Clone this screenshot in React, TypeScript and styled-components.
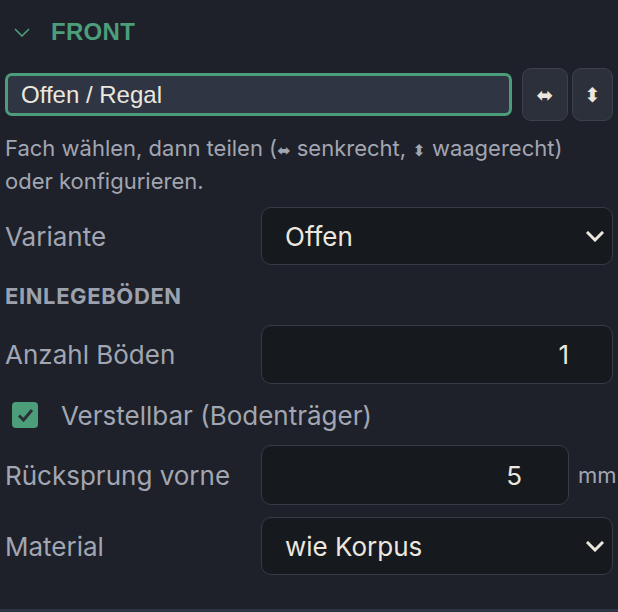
import React from 'react';
import styled, { createGlobalStyle } from 'styled-components';

const GlobalStyle = createGlobalStyle`
  html, body {
    margin: 0;
    padding: 0;
    background: #1e2129;
  }
`;

const Chevron = () => (
  <svg width='18' height='11' viewBox='0 0 18 11' fill='none'>
    <path d='M2 2l7 7 7-7' stroke='currentColor' strokeWidth='3' strokeLinecap='square' />
  </svg>
);

const Field = ({
  label,
  top,
  children,
}: {
  label: string;
  top: number;
  children: React.ReactNode;
}) => (
  <Row $top={top}>
    <Label>{label}</Label>
    {children}
  </Row>
);

const App = () => {
  return (
    <>
      <GlobalStyle />
      <Panel>
        <Header>
          <HeaderChevron>
            <svg width='16' height='9' viewBox='0 0 16 9' fill='none'>
              <path d='M1 1l7 7 7-7' stroke='currentColor' strokeWidth='1.6' />
            </svg>
          </HeaderChevron>
          <HeaderTitle>FRONT</HeaderTitle>
        </Header>

        <NameRow>
          <NameInput defaultValue='Offen / Regal' />
          <ButtonGroup>
            <SplitButton $width={46} title='senkrecht teilen'>⬌</SplitButton>
            <SplitButton $width={41} title='waagerecht teilen'>⬍</SplitButton>
          </ButtonGroup>
        </NameRow>

        <Hint>
          Fach wählen, dann teilen (<Arrow>⬌</Arrow> senkrecht, <Arrow>⬍</Arrow> waagerecht)
          <br />
          oder konfigurieren.
        </Hint>

        <Field label='Variante' top={10}>
          <SelectBox>
            <span>Offen</span>
            <Chevron />
          </SelectBox>
        </Field>

        <SubHeading>EINLEGEBÖDEN</SubHeading>

        <Field label='Anzahl Böden' top={17}>
          <NumberInput defaultValue='1' $height={59} />
        </Field>

        <CheckRow>
          <CheckBox>
            <svg width='17' height='14' viewBox='0 0 17 14' fill='none'>
              <path d='M2 7.5l4.5 4.5L15 2' stroke='#2b2f36' strokeWidth='3' />
            </svg>
          </CheckBox>
          <CheckLabel>Verstellbar (Bodenträger)</CheckLabel>
        </CheckRow>

        <Field label='Rücksprung vorne' top={17}>
          <UnitWrap>
            <NumberInput defaultValue='5' $height={60} $padRight={46} />
            <Unit>mm</Unit>
          </UnitWrap>
        </Field>

        <Field label='Material' top={12}>
          <SelectBox>
            <span>wie Korpus</span>
            <Chevron />
          </SelectBox>
        </Field>
      </Panel>
    </>
  );
};

const Panel = styled.div`
  display: flex;
  flex-direction: column;
  width: 618px;
  height: 612px;
  box-sizing: border-box;
  padding: 0 5px;
  border-bottom: 3px solid #2e3442;
  font-family: Inter, 'Noto Sans', sans-serif;
  color: #a2a6b2;
  overflow: hidden;
`;

const Header = styled.div`
  display: flex;
  align-items: center;
  height: 64px;
  flex: none;
  padding-left: 9px;
  gap: 21px;
`;

const HeaderChevron = styled.span`
  display: flex;
  color: #4c9e7b;
`;

const HeaderTitle = styled.span`
  font-family: 'Liberation Sans', Arial, sans-serif;
  font-weight: 700;
  font-size: 24px;
  color: #4c9e7b;
  letter-spacing: 0.3px;
`;

const NameRow = styled.div`
  display: flex;
  align-items: center;
  gap: 10px;
  margin-top: 4px;
  flex: none;
`;

const NameInput = styled.input`
  flex: 1;
  min-width: 0;
  height: 43px;
  box-sizing: border-box;
  padding: 0 13px;
  border: 3px solid #4c9e7b;
  border-radius: 7px;
  background: #2f3543;
  color: #ece7de;
  font-family: 'Liberation Sans', Arial, sans-serif;
  font-size: 24px;
  outline: none;
`;

const ButtonGroup = styled.div`
  display: flex;
  gap: 4px;
`;

const SplitButton = styled.button<{ $width: number }>`
  width: ${({ $width }) => $width}px;
  height: 53px;
  flex: none;
  display: flex;
  align-items: center;
  justify-content: center;
  padding: 0;
  border: 1.5px solid #3b414e;
  border-radius: 9px;
  background: #2b303b;
  color: #ece7de;
  font-family: 'DejaVu Sans', sans-serif;
  font-size: 20px;
`;

const Hint = styled.p`
  margin: 11px 0 0;
  font-size: 22px;
  line-height: 32.5px;
  color: #a2a6b2;
  white-space: nowrap;
  flex: none;
`;

const Arrow = styled.span`
  font-family: 'DejaVu Sans', sans-serif;
  font-size: 16px;
  line-height: 0;
`;

const Row = styled.div<{ $top: number }>`
  display: flex;
  align-items: center;
  margin-top: ${({ $top }) => $top}px;
  flex: none;
`;

const Label = styled.div`
  width: 256px;
  flex: none;
  font-size: 26px;
  color: #a2a6b2;
`;

const SelectBox = styled.div`
  flex: 1;
  height: 58px;
  box-sizing: border-box;
  display: flex;
  align-items: center;
  justify-content: space-between;
  padding: 0 8px 0 23px;
  border: 1.5px solid #363b47;
  border-radius: 10px;
  background: #16191e;
  color: #ece7de;
  font-size: 26px;
`;

const NumberInput = styled.input<{ $height: number; $padRight?: number }>`
  flex: 1;
  min-width: 0;
  width: 100%;
  height: ${({ $height }) => $height}px;
  box-sizing: border-box;
  padding: 0 ${({ $padRight = 43 }) => $padRight}px 0 16px;
  border: 1.5px solid #363b47;
  border-radius: 10px;
  background: #16191e;
  color: #ece7de;
  font-family: Inter, 'Noto Sans', sans-serif;
  font-size: 26px;
  text-align: right;
  outline: none;
`;

const UnitWrap = styled.div`
  flex: 1;
  display: flex;
  align-items: center;
  gap: 9px;
`;

const Unit = styled.span`
  font-size: 22px;
  color: #a2a6b2;
  width: 35px;
  flex: none;
`;

const SubHeading = styled.div`
  margin-top: 19px;
  line-height: 24px;
  font-size: 22px;
  font-weight: 700;
  letter-spacing: 0.6px;
  color: #9ca1ae;
  flex: none;
`;

const CheckRow = styled.div`
  display: flex;
  align-items: center;
  gap: 23px;
  height: 26px;
  margin-top: 18px;
  padding-left: 7px;
  flex: none;
`;

const CheckBox = styled.span`
  width: 26px;
  height: 26px;
  display: flex;
  align-items: center;
  justify-content: center;
  border-radius: 4px;
  background: #4c9e7b;
`;

const CheckLabel = styled.span`
  font-size: 26px;
  color: #a2a6b2;
`;

export default App;
